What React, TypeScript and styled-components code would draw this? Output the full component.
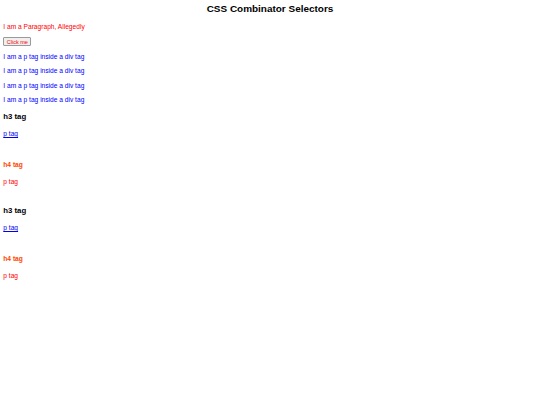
import React from 'react';
import styled, { createGlobalStyle } from 'styled-components';

// the page is a default-styled document shown at ~0.415 scale
const S = 0.415;
const px = (n: number) => `${(n * S).toFixed(2)}px`;

const GlobalStyle = createGlobalStyle`
    body {
        margin: ${px(8)};
        font-family: "Liberation Sans", Arial, sans-serif;
        font-size: ${px(16)};
        line-height: 1.15;
        background: #ffffff;
        color: #000000;
    }
`;

const Title = styled.h2`
    margin: 0 0 ${px(19.92)};
    font-size: ${px(24)};
    font-weight: bold;
    text-align: center;
`;

const Para = styled.p<{ color?: string }>`
    margin: ${px(16)} 0;
    color: ${(props) => props.color || '#000000'};
`;

const Button = styled.button`
    font-family: "Liberation Sans", Arial, sans-serif;
    font-size: ${px(13.33)};
    line-height: 1.15;
    color: #ff0000;
    background: #efefef;
    border: 1px solid #9a9a9a;
    border-radius: 1px;
    padding: ${px(1)} ${px(6)};
    margin: 0;
    vertical-align: middle;
`;

const Sections = styled.div`
    margin-top: 10px;
`;

const Group = styled.div`
    padding-bottom: ${px(19)};
`;

const H3 = styled.h3`
    margin: ${px(18.72)} 0;
    font-size: ${px(18.72)};
    font-weight: bold;
`;

const H4 = styled.h4`
    margin: ${px(21.28)} 0;
    font-size: ${px(16)};
    font-weight: bold;
    color: #ff4500;
`;

const Link = styled.a`
    color: #0000ee;
    text-decoration: underline;
`;

const divParas = [1, 2, 3, 4];

const App = () => (
    <>
        <GlobalStyle />
        <Title>CSS Combinator Selectors</Title>
        <Para color="#ff0000">I am a Paragraph, Allegedly</Para>
        <Para>
            <Button>Click me</Button>
        </Para>
        <div>
            {divParas.map((i) => (
                <Para key={i} color="#0000ff">
                    I am a p tag inside a div tag
                </Para>
            ))}
        </div>
        <Sections>
            {[1, 2].map((i) => (
                <div key={i}>
                    <Group>
                        <H3>h3 tag</H3>
                        <Para>
                            <Link href="#">p tag</Link>
                        </Para>
                    </Group>
                    <Group>
                        <H4>h4 tag</H4>
                        <Para color="#ff0000">p tag</Para>
                    </Group>
                </div>
            ))}
        </Sections>
    </>
);

export default App;
